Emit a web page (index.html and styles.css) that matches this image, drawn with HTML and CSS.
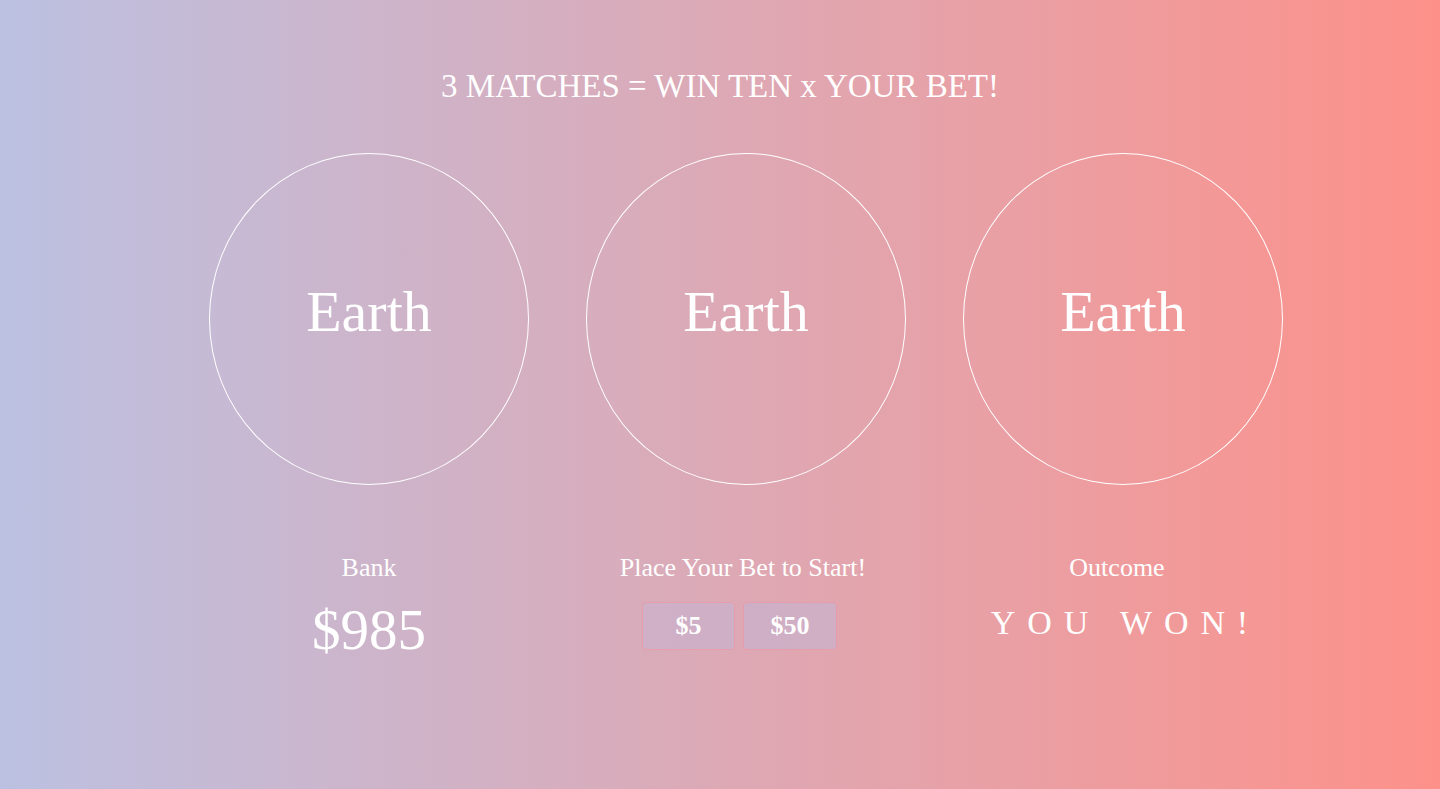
FILE: index.html
```html
<!DOCTYPE html>
<html lang="en">
<head>
<meta charset="utf-8">
<title>Slot Machine</title>
<link rel="stylesheet" href="styles.css">
</head>
<body>
<main class="page">
  <h1 class="title">3 MATCHES = WIN TEN x YOUR BET!</h1>
  <section class="reels">
    <div class="reel"><span class="reel-text">Earth</span></div>
    <div class="reel"><span class="reel-text">Earth</span></div>
    <div class="reel"><span class="reel-text">Earth</span></div>
  </section>
  <section class="panel">
    <div class="col">
      <div class="label">Bank</div>
      <div class="bank">$985</div>
    </div>
    <div class="col">
      <div class="label">Place Your Bet to Start!</div>
      <div class="bets">
        <button class="bet">$5</button>
        <button class="bet">$50</button>
      </div>
    </div>
    <div class="col">
      <div class="label">Outcome</div>
      <div class="outcome">YOU WON!</div>
    </div>
  </section>
</main>
</body>
</html>
```
FILE: styles.css
```css
html, body {
  margin: 0;
  padding: 0;
  height: 100%;
}
body {
  background: linear-gradient(to right, #bcc1e1 0%, #fd918a 100%);
  color: #ffffff;
  font-family: "Liberation Serif", "DejaVu Serif", serif;
  overflow: hidden;
}
.page {
  display: flex;
  flex-direction: column;
  width: 1440px;
  height: 789px;
}
.title {
  margin: 0;
  padding-top: 66px;
  height: 40px;
  text-align: center;
  font-weight: normal;
  font-size: 33px;
  line-height: 40px;
}
.reels {
  display: flex;
  gap: 57px;
  padding-left: 209px;
  margin-top: 47px;
}
.reel {
  box-sizing: border-box;
  width: 320px;
  height: 332px;
  border: 1px solid #ffffff;
  border-radius: 50%;
  display: flex;
  align-items: center;
  justify-content: center;
}
.reel-text {
  font-size: 58px;
  line-height: 1;
  margin-top: -14px;
}
.panel {
  display: grid;
  grid-template-columns: repeat(3, 374px);
  padding-left: 182px;
  margin-top: 68px;
}
.col {
  display: flex;
  flex-direction: column;
  align-items: center;
}
.label {
  font-size: 26px;
  line-height: 30px;
}
.bank {
  font-size: 57px;
  line-height: 60px;
  margin-top: 17px;
}
.bets {
  display: flex;
  gap: 8px;
  margin-top: 19px;
  margin-right: 7px;
}
.bet {
  box-sizing: border-box;
  width: 93px;
  height: 48px;
  background: rgba(205, 176, 200, 0.85);
  border: 1px solid rgba(240, 150, 160, 0.7);
  border-radius: 4px;
  color: #ffffff;
  font-family: "Liberation Serif", "DejaVu Serif", serif;
  font-size: 26px;
  font-weight: bold;
  padding: 0;
}
.bet + .bet {
  width: 94px;
}
.outcome {
  font-size: 34px;
  line-height: 40px;
  letter-spacing: 0.35em;
  margin-top: 20px;
  padding-left: calc(0.35em + 5px);
}
```
